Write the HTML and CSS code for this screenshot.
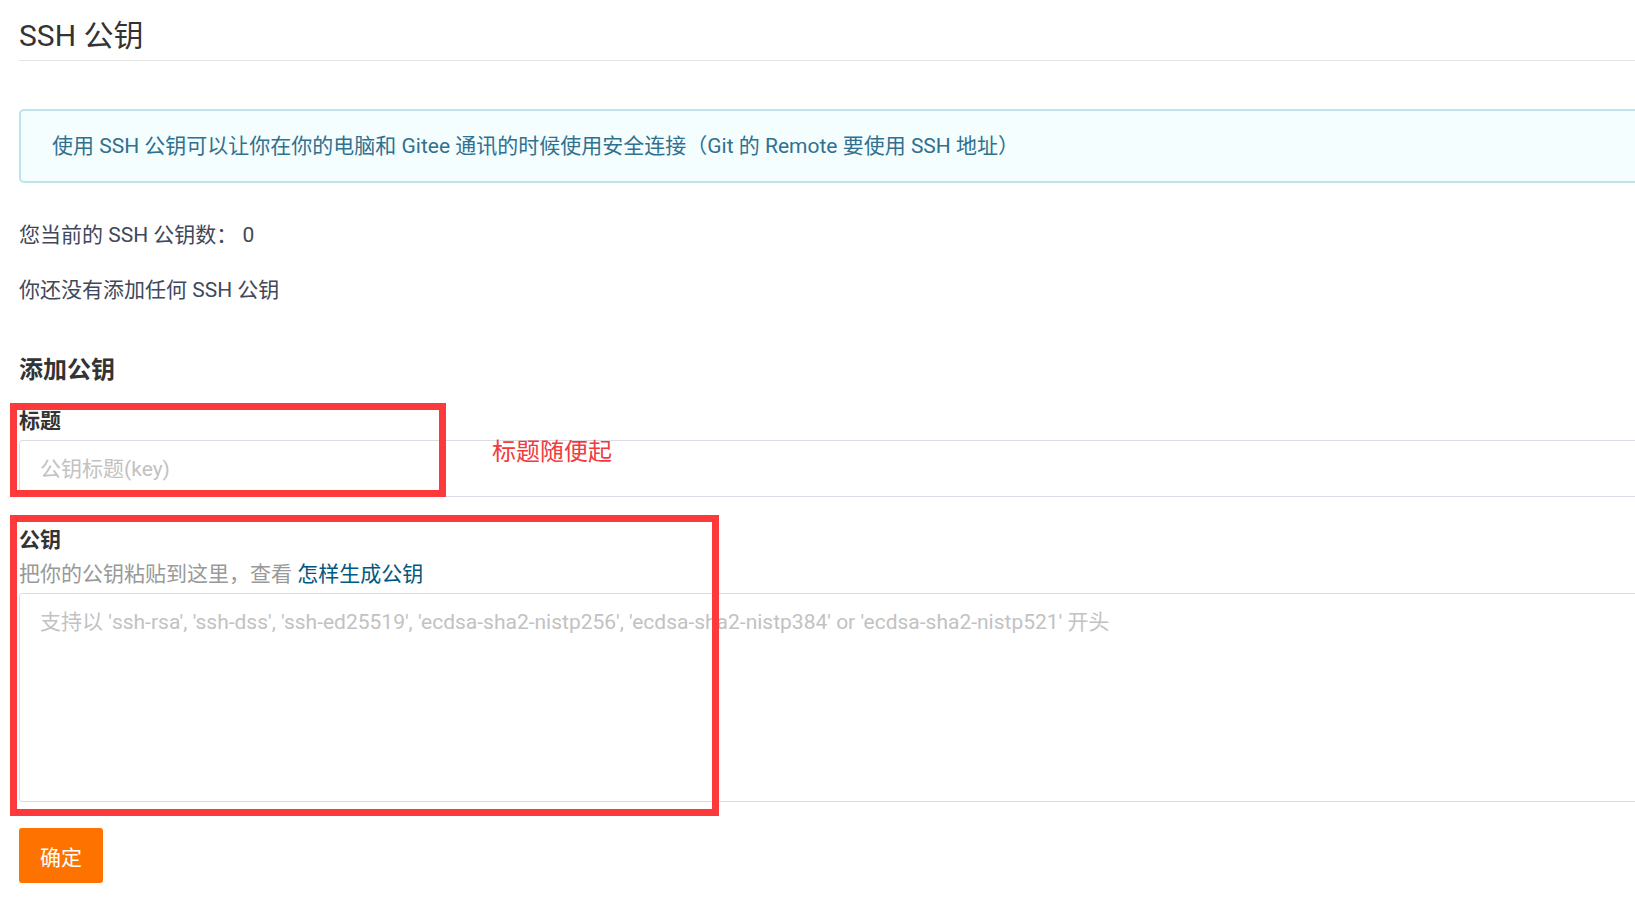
FILE: index.html
```html
<!DOCTYPE html>
<html lang="zh-CN">
<head>
    <meta charset="UTF-8">
    <meta name="viewport" content="width=device-width, initial-scale=1.0">
    <title>SSH 公钥</title>
    <link rel="stylesheet" href="styles.css">
</head>
<body>
    <div class="page">
        <h2 class="page-title">SSH 公钥</h2>

        <div class="info-box">使用 SSH 公钥可以让你在你的电脑和 Gitee 通讯的时候使用安全连接（Git 的 Remote 要使用 SSH 地址）</div>

        <p class="key-count">您当前的 SSH 公钥数： 0</p>
        <p class="key-empty">你还没有添加任何 SSH 公钥</p>

        <h3 class="form-title">添加公钥</h3>
        <form id="keyForm">
            <div class="field">
                <label for="keyTitle">标题</label>
                <input type="text" id="keyTitle" name="title" placeholder="公钥标题(key)">
            </div>
            <div class="field field-key">
                <label for="keyBody">公钥</label>
                <div class="hint">把你的公钥粘贴到这里，查看 <a href="#">怎样生成公钥</a></div>
                <textarea id="keyBody" name="key" placeholder="支持以 'ssh-rsa', 'ssh-dss', 'ssh-ed25519', 'ecdsa-sha2-nistp256', 'ecdsa-sha2-nistp384' or 'ecdsa-sha2-nistp521' 开头"></textarea>
            </div>
            <button type="submit" class="btn-submit">确定</button>
        </form>

        <!-- annotations drawn over the screenshot -->
        <div class="mark mark-title"></div>
        <div class="mark mark-key"></div>
        <div class="mark-note">标题随便起</div>
    </div>
</body>
</html>
```

FILE: styles.css
```css
body {
    margin: 0;
    overflow: hidden;
    background: #fff;
    font-family: Roboto, "Noto Sans CJK SC", sans-serif;
    font-size: 21px;
    color: #333;
}
.page {
    position: relative;
    width: 1700px;
    padding-left: 19px;
}
.page-title {
    margin: 0;
    padding: 15px 0 3px;
    font-size: 30px;
    font-weight: normal;
    line-height: 42px;
    color: #333;
    border-bottom: 1px solid #e3e3e3;
}
.info-box {
    margin-top: 48px;
    padding: 19px 31px;
    line-height: 32px;
    color: #31708f;
    background-color: #f4feff;
    border: 2px solid #bfe3ec;
    border-radius: 5px;
}
.key-count,
.key-empty {
    margin: 0;
    line-height: 32px;
    color: #40485b;
}
.key-count {
    margin-top: 36px;
}
.key-empty {
    margin-top: 23px;
}
.form-title {
    margin: 46px 0 0;
    font-size: 24px;
    font-weight: bold;
    line-height: 36px;
}
.field {
    margin-top: 17px;
}
.field-key {
    margin-top: 27px;
}
.field label {
    display: block;
    font-weight: bold;
    line-height: 32px;
}
.hint {
    margin-top: 2px;
    line-height: 32px;
    color: #999;
}
.hint a {
    color: #005980;
    text-decoration: none;
}
input[type="text"],
textarea {
    display: block;
    box-sizing: border-box;
    width: 100%;
    margin-top: 3px;
    font-family: inherit;
    font-size: 21px;
    color: #333;
    border: 1px solid #dcdce6;
    border-radius: 3px;
    outline: none;
}
input[type="text"] {
    height: 57px;
    padding: 0 20px;
}
textarea {
    height: 209px;
    padding: 12px 20px;
    line-height: 32px;
    resize: none;
}
input::placeholder,
textarea::placeholder {
    color: #c2c2c2;
}
.btn-submit {
    display: block;
    width: 84px;
    height: 55px;
    margin-top: 26px;
    padding: 0;
    font-family: inherit;
    font-size: 21px;
    color: #fff;
    background-color: #fe7300;
    border: none;
    border-radius: 3px;
    cursor: pointer;
}
.mark {
    position: absolute;
    box-sizing: border-box;
    border: 7px solid #fd3a3b;
}
.mark-title {
    left: 10px;
    top: 403px;
    width: 436px;
    height: 94px;
}
.mark-key {
    left: 10px;
    top: 515px;
    width: 709px;
    height: 301px;
}
.mark-note {
    position: absolute;
    left: 492px;
    top: 434px;
    font-size: 24px;
    line-height: 36px;
    color: #f23a3f;
}
```
